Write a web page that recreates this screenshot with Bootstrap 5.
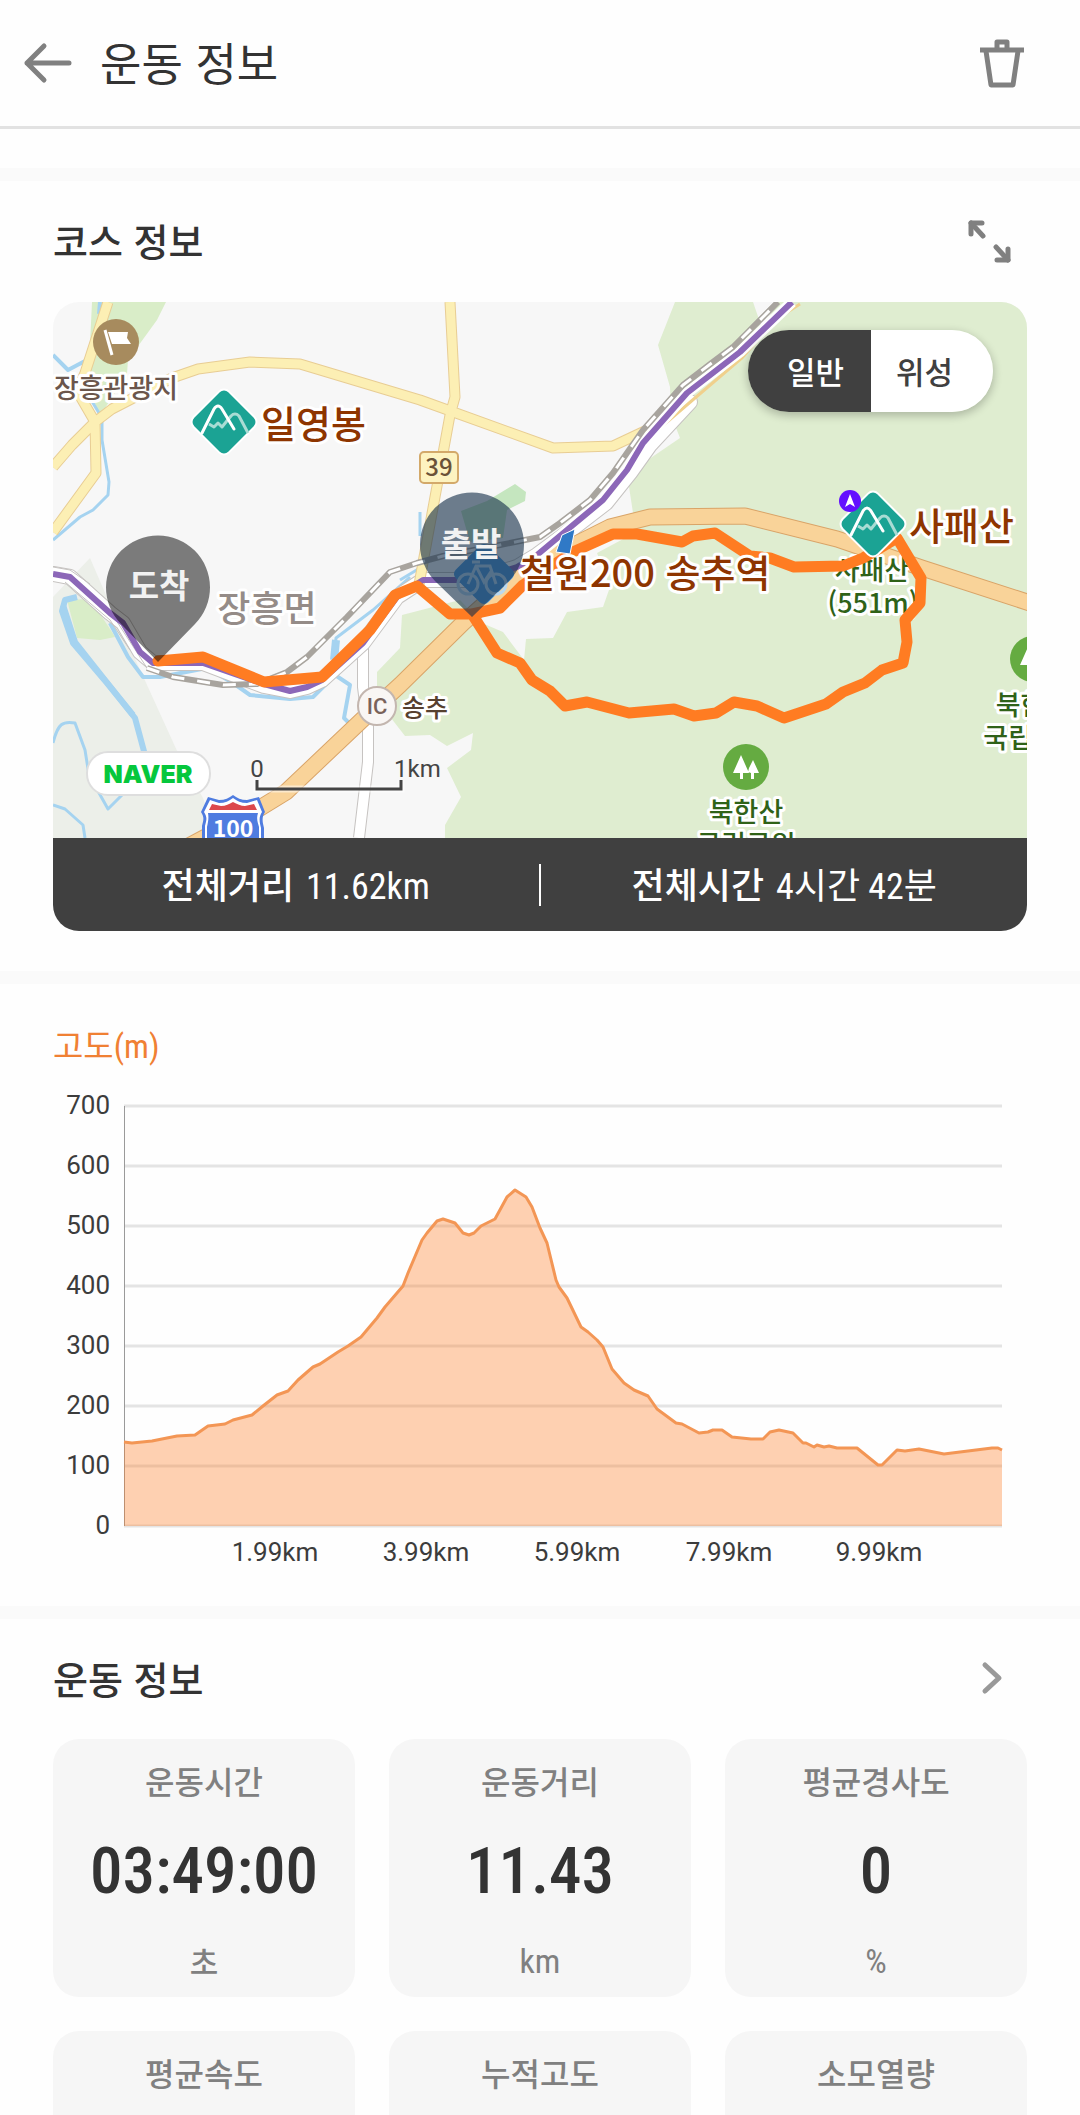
<!DOCTYPE html>
<html lang="ko">
<head>
<meta charset="utf-8">
<meta name="viewport" content="width=device-width, initial-scale=1">
<title>운동 정보</title>
<link rel="stylesheet" href="https://cdn.jsdelivr.net/npm/bootstrap@5.3.0/dist/css/bootstrap.min.css">
<script src="https://cdn.jsdelivr.net/npm/bootstrap@5.3.0/dist/js/bootstrap.bundle.min.js"></script>
<style>
  :root { --ink: #333; --soft: #808080; --bar: #404040; --kr: "Noto Sans CJK KR", "Noto Sans", sans-serif; --narrow: "Roboto Condensed", "Noto Sans CJK KR", sans-serif; }
  body { font-family: var(--kr); color: var(--ink); background: #fefefe; }
  .app-main { min-height: 0; scrollbar-width: none; }
  .app-main::-webkit-scrollbar { display: none; }
  .app-head { height: 129px; border-bottom: 3px solid #e2e2e2; padding: 0 48px 0 14px; flex: none; }
  .app-head h1 { font-size: 45px; line-height: 60px; font-weight: 400; margin: 0; padding: 0 0 2px 20px; }
  .icon-btn { border: 0; padding: 8px; line-height: 0; background: none; color: var(--soft); }
  .icon-btn svg { display: block; }
  .strip { height: 13px; background: #fafafa; }
  .app-main > .strip:first-child { margin-top: 39px; }
  .block { padding: 32px 53px 40px; }
  .block-head { height: 56px; }
  .block-head h2 { font-size: 38px; line-height: 52px; font-weight: 500; margin: 0; padding-bottom: 3px; }
  .course { margin-top: 33px; border-radius: 26px; }
  .course svg, .chart svg { display: block; width: 100%; height: auto; }
  .map-mode { top: 28px; right: 34px; border-radius: 41px; box-shadow: 0 3px 8px 1px rgba(0,0,0,.22); }
  .map-mode .btn { width: 123px; height: 82px; border: 0; font-size: 31px; line-height: 82px; padding: 0; font-weight: 500; color: var(--bar); background: #fff; }
  .map-mode .btn:first-of-type { padding-left: 12px; border-radius: 41px 0 0 41px; }
  .map-mode .btn:last-of-type { padding-right: 14px; border-radius: 0 41px 41px 0; }
  .map-mode .btn-check:checked + .btn { background: var(--bar); color: #fff; }
  .totals { height: 93px; background: var(--bar); color: #fff; font-family: var(--narrow); font-size: 36px; line-height: 48px; }
  .totals > .w-50 { padding-top: 5px; }
  .totals b { font-weight: 500; margin-right: 12px; }
  .totals .rule { width: 3px; height: 42px; background: #fff; }
  .chart-title { color: #f08033; font-family: var(--narrow); font-size: 33px; line-height: 44px; font-weight: 400; margin: 0; padding-top: 5px; }
  .chart { margin-top: 13px; }
  .stat { background: #f6f6f6; border-radius: 26px; min-height: 258px; padding-top: 18px; text-align: center; }
  .stat dt { color: var(--soft); font-weight: 500; font-size: 32px; line-height: 46px; }
  .stat dd { margin: 0; }
  .stat .num { font-family: var(--narrow); font-weight: 500; font-size: 65px; line-height: 84px; margin-top: 26px; }
  .stat .unit { color: var(--soft); font-family: var(--narrow); font-weight: 400; font-size: 34px; line-height: 44px; margin-top: 26px; }
  .stat .unit-kr { font-family: var(--kr); font-size: 31px; font-weight: 500; }
  .stats { --bs-gutter-x: 34px; --bs-gutter-y: 34px; margin-top: -2px; }
  .axis { font-family: Roboto, sans-serif; font-size: 26px; fill: #3c3c3c; }
  .lbl { font-family: var(--kr); font-weight: 500; paint-order: stroke; stroke: #fff; stroke-width: 6px; stroke-linejoin: round; }
</style>
</head>
<body class="vh-100 overflow-hidden d-flex flex-column">

<header class="app-head d-flex align-items-center justify-content-between">
  <div class="d-flex align-items-center">
    <button class="icon-btn" type="button" aria-label="뒤로">
      <svg width="50" height="44" viewBox="0 0 50 44" fill="none" stroke="currentColor" stroke-width="5" stroke-linecap="round" stroke-linejoin="round"><path d="M22 5 5 22l17 17M5 22h42"/></svg>
    </button>
    <h1>운동 정보</h1>
  </div>
  <button class="icon-btn" type="button" aria-label="삭제">
    <svg width="44" height="52" viewBox="0 0 44 52" fill="none" stroke="currentColor" stroke-width="5" stroke-linejoin="round"><path d="M0 13h44" /><path d="M17 12V5h10v7M6 14l5 34h22l5-34"/></svg>
  </button>
</header>

<main class="app-main flex-grow-1 overflow-auto">
  <div class="strip"></div>

  <section class="block">
    <div class="block-head d-flex align-items-center justify-content-between">
      <h2>코스 정보</h2>
      <button class="icon-btn me-2" type="button" aria-label="지도 크게 보기">
        <svg width="44" height="44" viewBox="0 0 44 44"><g fill="none" stroke="currentColor" stroke-width="5" stroke-linecap="round" stroke-linejoin="round"><path d="m4 4 12 13M41 41 29 28"/><path d="M4 15V4h11M41 30v11H30"/></g></svg>
      </button>
    </div>

    <div class="course position-relative overflow-hidden">
      <svg viewBox="53 302 974 536" role="img" aria-label="코스 지도">
        <rect x="53" y="302" width="974" height="536" fill="#f7f7f7"/>
        <!-- parks and hills -->
        <path fill="#ecefe9" d="M53 597 90 558l16 37 72 158 25 45 14 40H53z"/>
        <path fill="#d9edc8" d="M92 302h74l-9 18-29 40-1 14-27 42-12-30zM67 600l23-1 22 33 3 5-15 3-23-2z"/>
        <path fill="#dfedd0" d="M675 302 658 345 670 387 671 415 680 438 633 470 628 480 633 513 640 530 597 553 610 587 603 607 567 612 553 638 526 639 524 660 503 632 482 623 460 600 402 615 400 648 377 672 377 700 405 736 430 735 447 746 473 733 471 750 447 768 461 797 445 825V838H1027V302z"/>
        <path fill="#c5e6bf" d="m515 484 11 8-1 9-18 9-4 28-33 4-9-31 26-10z"/>
        <path fill="#f7f7f7" d="M753 302h25l-16 26z"/>
        <!-- water -->
        <g fill="none" stroke="#a5d3f0" stroke-width="4" stroke-linejoin="round">
          <path d="m100 302-1 12M53 355l15 15 17-9"/>
          <path stroke-width="3" d="M90 398l12 20v22l7 42-1 13-15 15-13 7-27 23"/>
          <path stroke-width="6" d="M77 597 65 600l-3 11 11 32 34 40 26 32"/>
          <path stroke-width="6" d="m63 605 12 37 60 76 10 37"/>
          <path stroke-width="4" d="M110 623 128 657 143 677 160 677 207 668 233 683 250 695 290 699 313 697 335 675 350 685 344 718 350 724"/>
          <path stroke-width="3" d="m333 665 3-27 37-28 37-33"/><path stroke-width="8" d="m334 660 2-20"/>
          <path stroke-width="3" d="M53 743c5-20 10-22 22-20l10 27 4 25 19 34 14-14M53 805l12 4 18 16 2 13M420 512v24M400 580l20-12"/>
        </g>
        <!-- minor roads -->
        <g fill="none" stroke-linejoin="round">
          <path stroke="#c6c3c1" stroke-width="12" d="M363 640v47l5 40v35l-9 76"/>
          <path stroke="#fff" stroke-width="10" d="M363 640v47l5 40v35l-9 76"/>
          <path stroke="#c6c3c1" stroke-width="16" stroke-linecap="round" d="M53 574 70 577 110 613 123 623 140 652 153 663 203 663 264 686 290 691 307 687 322 680 363 643 397 597 423 580 475 580 517 567 537 555 567 533 606 503 630 473 650 445 690 402"/>
          <path stroke="#fff" stroke-width="14" stroke-linecap="round" d="M53 574 70 577 110 613 123 623 140 652 153 663 203 663 264 686 290 691 307 687 322 680 363 643 397 597 423 580 475 580 517 567 537 555 567 533 606 503 630 473 650 445 690 402"/>
        </g>
        <!-- yellow roads -->
        <path fill="none" stroke-linejoin="round" stroke="#e8cd94" stroke-width="11" d="M108 302 85 373l-8 18 18 31 1 51-43 59M53 467l19-22 23-23 17-13 60-31 26-9 52-7 50 2 120 36 133 48 60-2 34-16M450 302l5 95-5 18-32 175"/>
        <path fill="none" stroke="#f0d08c" stroke-width="3" d="M660 428 695 398 742 358 775 320 800 304"/>
        <path fill="none" stroke-linejoin="round" stroke="#fcefb4" stroke-width="9" d="M108 302 85 373l-8 18 18 31 1 51-43 59M53 467l19-22 23-23 17-13 60-31 26-9 52-7 50 2 120 36 133 48 60-2 34-16M450 302l5 95-5 18-32 175"/>
        <!-- trunk road -->
        <path fill="none" stroke="#d9a468" stroke-width="17" stroke-linejoin="round" d="M170 856 260 808 286 792 363 719 400 685 463 623 500 590 560 552 610 527 650 517 745 516 837 539 922 568 1030 603"/>
        <path fill="none" stroke="#f9d399" stroke-width="15" stroke-linejoin="round" d="M170 856 260 808 286 792 363 719 400 685 463 623 500 590 560 552 610 527 650 517 745 516 837 539 922 568 1030 603"/>
        <!-- railway -->
        <g fill="none" stroke-linejoin="round">
          <path stroke="#fff" stroke-width="11" d="M537 555 567 530 603 500 627 470 643 443 687 393 740 352 792 302"/>
          <path stroke="#c6c3c1" stroke-width="1" d="M53 567 70 570 90 584M65 582 110 620 130 650M72 582 112 614 147 668"/>
          <path stroke="#a8a49e" stroke-width="6" d="M147 668 173 677 223 685 257 684 287 672 307 657 347 617 390 572 417 563 443 556 500 545 540 537 560 523 590 500 613 473 643 430 683 385 713 362 733 347 778 302"/>
          <path stroke="#fff" stroke-width="3" stroke-dasharray="13 13" d="M147 668 173 677 223 685 257 684 287 672 307 657 347 617 390 572 417 563 443 556 500 545 540 537 560 523 590 500 613 473 643 430 683 385 713 362 733 347 778 302"/>
          <path stroke="#8c67b8" stroke-width="6" d="M53 574 70 577 110 613 123 623 140 652 153 663 203 663 264 684 290 691 307 687 322 680 363 643 397 597 423 580 475 580 517 567 537 555 567 530 603 500 627 470 643 443 687 393 740 352 792 302"/>
        </g>
        <!-- map labels -->
        <g class="lbl" text-anchor="middle">
          <g font-size="27" fill="#2f6218"><text x="872" y="580">사패산</text><text x="873" y="613">(551m)</text><text x="746" y="822">북한산</text><text x="746" y="855">국립공원</text><text x="1033" y="715">북한산</text><text x="1033" y="748">국립공원</text></g>
          <text x="116" y="398" font-size="27" fill="#6b564c">장흥관광지</text>
          <text x="267" y="622" font-size="36" fill="#958c88">장흥면</text>
          <text x="425" y="717" font-size="25" fill="#57402f">송추</text>
        </g>
        <!-- course -->
        <path fill="none" stroke="#ff7c22" stroke-width="11" stroke-linejoin="round" stroke-linecap="round" d="M158 661 203 657 264 682 322 677 370 630 395 595 417 586 450 614 472 614 500 608 523 585 573 552 613 534 637 534 682 542 693 536 715 533 750 556 770 558 794 567 843 566 863 558 897 538 912 563 921 578 920 603 905 620 907 642 903 663 882 670 865 683 843 692 826 704 784 718 757 706 734 702 716 713 694 716 674 709 629 713 587 702 565 706 550 691 532 680 520 663 497 653 472 614"/>
        <!-- station -->
        <rect x="461" y="551" width="46" height="46" rx="6" transform="rotate(45 484 574)" fill="#4c9ade"/>
        <g fill="none" stroke="#b9d8f0" stroke-width="3"><circle cx="468" cy="584" r="10"/><circle cx="496" cy="584" r="10"/><path d="m468 584 8-18h14l6 18M476 566l8 16 8-12M472 562h8"/></g>
        <path fill="#3079c6" stroke="#fff" stroke-width="1" d="m562 535 13-6-5 25-14-2z"/>
        <!-- shields -->
        <rect x="420" y="452" width="38" height="31" rx="4" fill="#fdf3c0" stroke="#d3a96a" stroke-width="2"/>
        <text x="439" y="476" text-anchor="middle" font-family="Noto Sans CJK KR, sans-serif" font-weight="500" font-size="24" fill="#6b5238">39</text>
        <circle cx="377" cy="706" r="19" fill="#f9f6f4" stroke="#c3b6af" stroke-width="2"/>
        <text x="377" y="714" text-anchor="middle" font-family="Roboto, sans-serif" font-weight="500" font-size="22" fill="#7a625a">IC</text>
        <path fill="#4f7ce0" d="m208 797 11 3c6 0 10-2 14-5 4 3 8 5 14 5l12-3 6 15c-4 6-2 11-1 16v10h-62v-12c1-5 3-8-1-14z"/>
        <path fill="#fff" d="m210 800 9 3c6 0 10-2 14-5 4 3 8 5 14 5l10-3 5 12c-4 6-2 11-1 16v10h-56v-12c1-5 3-8-1-14z"/>
        <path fill="#dc484c" d="m212 804 9 2c5 0 8-2 12-4 4 2 8 4 12 4l9-2 3 6h-48z"/>
        <path fill="#4f7ce0" d="M208 813h50c-2 6 0 10 1 14v11h-52v-11c1-5 2-9 1-14z"/>
        <text x="233" y="837" text-anchor="middle" font-family="Noto Sans CJK KR, sans-serif" font-weight="700" font-size="23" fill="#fff">100</text>
        <!-- place icons -->
        <circle cx="116" cy="342" r="23" fill="#a78b5e"/><path d="m105 330 7 25" stroke="#fff" stroke-width="3"/><path fill="#fff" d="M108 332h20l-1 6 4 6h-19z"/>
        <g id="park"><circle cx="746" cy="767" r="23" fill="#65ab41"/><path fill="#fff" d="m741 755 8 18h-6v6h-3v-6h-7zm12 5 6 13h-5v6h-3v-6l-3-1 1-4z"/></g>
        <use href="#park" x="287" y="-108"/>
        <g id="peak"><rect x="199" y="397" width="50" height="50" rx="7" transform="rotate(45 224 422)" fill="#1ba394" stroke="#fff" stroke-width="2"/>
          <path fill="none" stroke="#a9dcd4" stroke-width="3" stroke-linejoin="round" d="m209 424 5 3 4-4 4 4 4-5 5-6q4-4 8 0l9 17"/>
          <path fill="none" stroke="#fff" stroke-width="3" stroke-linecap="round" d="m202 433 12-24q4-6 8 0l12 20"/></g>
        <use href="#peak" x="649" y="102"/>
        <circle cx="850" cy="501" r="11" fill="#6410ff"/><path fill="#fff" d="m850 494 5 13-5-3-5 3z"/>
        <g class="lbl" font-size="38" fill="#8e3500"><text x="261" y="438">일영봉</text><text x="909" y="540">사패산</text><text x="520" y="587">철원200 송추역</text></g>
        <!-- start and finish pins -->
        <path fill="#000" fill-opacity=".5" d="M158 662 121 624a52 52 0 1 1 74 0z"/>
        <path fill="#16304a" fill-opacity=".62" d="M472 617 435 581a52 52 0 1 1 74 0z"/>
        <g font-family="Noto Sans CJK KR, sans-serif" font-weight="700" font-size="33" fill="#f2f2f2" text-anchor="middle"><text x="159" y="598">도착</text><text x="471" y="556">출발</text></g>
        <!-- attribution and scale -->
        <rect x="87" y="752" width="123" height="43" rx="21" fill="#fff" stroke="#dedede" stroke-width="2"/>
        <text x="148" y="783" text-anchor="middle" font-family="Inter, sans-serif" font-weight="900" font-size="25" fill="#06c73c">NAVER</text>
        <path d="M257 780v9h144v-9" fill="none" stroke="#fff" stroke-opacity=".5" stroke-width="7"/><path d="M257 780v9h144v-9" fill="none" stroke="#444" stroke-width="3"/>
        <g font-family="Roboto, sans-serif" font-size="24" fill="#444"><text x="257" y="777" text-anchor="middle">0</text><text x="394" y="777">1km</text></g>
      </svg>
      <div class="map-mode btn-group position-absolute" role="group" aria-label="지도 유형">
        <input type="radio" class="btn-check" name="mode" id="modeMap" checked><label class="btn" for="modeMap">일반</label>
        <input type="radio" class="btn-check" name="mode" id="modeSat"><label class="btn" for="modeSat">위성</label>
      </div>
      <div class="totals d-flex align-items-center text-center">
        <div class="flex-fill w-50"><b>전체거리</b>11.62km</div>
        <div class="rule"></div>
        <div class="flex-fill w-50"><b>전체시간</b>4시간 42분</div>
      </div>
    </div>
  </section>

  <div class="strip"></div>

  <section class="block">
    <div class="d-flex align-items-center block-head"><h3 class="chart-title">고도(m)</h3></div>
    <div class="chart">
      <svg viewBox="53 1085 974 481" role="img" aria-label="고도 그래프">
        <path stroke="#e4e4e4" stroke-width="3" d="M124 1106h878M124 1166h878M124 1226h878M124 1286h878M124 1346h878M124 1406h878M124 1466h878M124 1526h878"/>
        <path stroke="#9a9a9a" d="M124.5 1106v420"/>
        <path id="area" fill="#ff7c22" fill-opacity=".35"/>
        <path id="line" fill="none" stroke="#f39655" stroke-width="3" stroke-linejoin="round"/>
        <g class="axis" text-anchor="end"><text x="110" y="1114">700</text><text x="110" y="1174">600</text><text x="110" y="1234">500</text><text x="110" y="1294">400</text><text x="110" y="1354">300</text><text x="110" y="1414">200</text><text x="110" y="1474">100</text><text x="110" y="1534">0</text></g>
        <g class="axis" text-anchor="middle"><text x="275" y="1561">1.99km</text><text x="426" y="1561">3.99km</text><text x="577" y="1561">5.99km</text><text x="729" y="1561">7.99km</text><text x="879" y="1561">9.99km</text></g>
      </svg>
    </div>
  </section>

  <div class="strip"></div>

  <section class="block">
    <div class="block-head d-flex align-items-center justify-content-between">
      <h2>운동 정보</h2>
      <button class="icon-btn me-3" type="button" aria-label="자세히">
        <svg width="24" height="36" viewBox="0 0 24 36" fill="none" stroke="#999" stroke-width="5" stroke-linecap="round" stroke-linejoin="round"><path d="m6 4 14 13L6 30"/></svg>
      </button>
    </div>
    <div class="row row-cols-3 stats">
      <div class="col"><dl class="stat mb-0"><dt>운동시간</dt><dd class="num">03:49:00</dd><dd class="unit unit-kr">초</dd></dl></div>
      <div class="col"><dl class="stat mb-0"><dt>운동거리</dt><dd class="num">11.43</dd><dd class="unit">km</dd></dl></div>
      <div class="col"><dl class="stat mb-0"><dt>평균경사도</dt><dd class="num">0</dd><dd class="unit">%</dd></dl></div>
      <div class="col"><dl class="stat mb-0"><dt>평균속도</dt></dl></div>
      <div class="col"><dl class="stat mb-0"><dt>누적고도</dt></dl></div>
      <div class="col"><dl class="stat mb-0"><dt>소모열량</dt></dl></div>
    </div>
  </section>
</main>

<script>
  // Elevation profile, in chart coordinates
  const profile = "124,1442 132,1443 152,1441 167,1438 177,1436 195,1435 208,1426 225,1424 233,1420 252,1415 263,1406 277,1395 288,1391 298,1380 313,1367 320,1364 338,1352 348,1346 361,1337 377,1318 385,1307 403,1286 408,1273 422,1240 427,1233 437,1221 443,1219 455,1223 463,1233 469,1235 474,1233 481,1226 495,1219 507,1197 515,1190 526,1197 532,1207 540,1228 547,1243 556,1280 559,1287 567,1298 581,1327 588,1332 597,1340 603,1347 612,1369 624,1383 634,1390 648,1396 657,1409 676,1423 682,1424 699,1433 708,1432 713,1430 722,1430 732,1437 751,1439 763,1439 770,1432 779,1430 793,1433 803,1443 806,1443 814,1447 817,1445 824,1447 829,1446 837,1448 857,1448 878,1465 882,1465 897,1450 905,1451 919,1449 944,1454 992,1448 998,1448 1002,1450";
  document.getElementById("line").setAttribute("d", "M" + profile);
  document.getElementById("area").setAttribute("d", "M" + profile + " 1002,1526 124,1526z");
</script>
</body>
</html>
